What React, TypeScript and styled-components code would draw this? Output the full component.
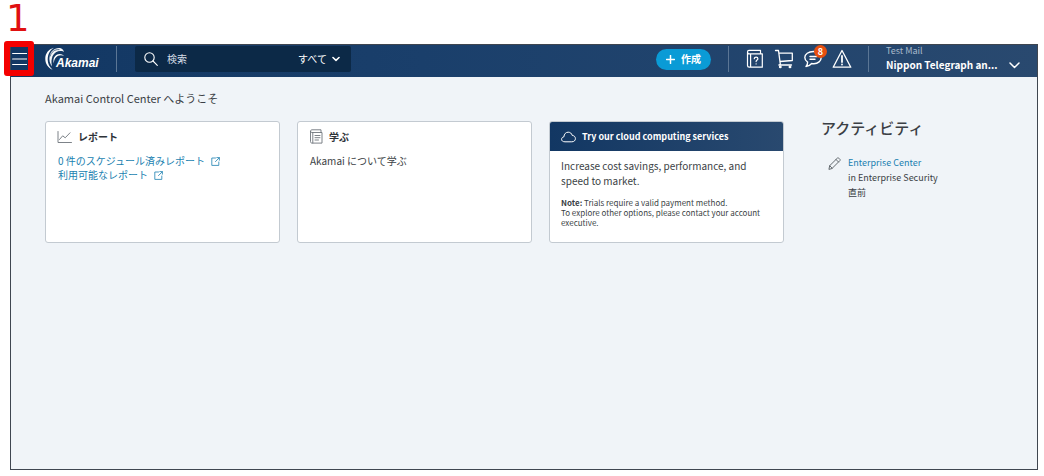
import React from "react";
import styled, { createGlobalStyle } from "styled-components";

const GlobalStyle = createGlobalStyle`
  * { box-sizing: border-box; }
  body {
    margin: 0;
    background: #fff;
    color: #3b3f45;
    font-family: "Noto Sans CJK JP", "Noto Sans", sans-serif;
    font-size: 10px;
    line-height: 14px;
  }
  h1, h2, p { margin: 0; font-weight: 400; }
  button, input, select { font: inherit; color: inherit; }
  svg { display: block; flex: none; }
`;

const Page = styled.div`
  display: flex;
  flex-direction: column;
  min-height: 100vh;
  padding: 0 6px 6px 10px;
`;

const StepNumber = styled.div`
  height: 44px;
  margin-left: -4px;
  color: #e01010;
  font-family: "DejaVu Sans", sans-serif;
  font-size: 37px;
  line-height: 38px;
`;

const Frame = styled.div`
  position: relative;
  display: flex;
  flex: 1;
  flex-direction: column;
  border: 1px solid #3f4650;
  background: #f0f4f8;
`;

const StepMarker = styled.div`
  position: absolute;
  top: -4px;
  left: -7px;
  width: 30px;
  height: 35px;
  border: 6px solid #f40000;
  border-radius: 3px;
  pointer-events: none;
`;

const Header = styled.header`
  display: flex;
  align-items: center;
  height: 32px;
  padding-bottom: 4px;
  color: #fff;
  background: linear-gradient(90deg, #123763 0%, #1a3f6b 40%, #29496f 100%);
`;

const IconButton = styled.button`
  position: relative;
  display: flex;
  align-items: center;
  justify-content: center;
  width: 20px;
  height: 20px;
  padding: 0;
  border: 0;
  background: none;
`;

const MenuButton = styled(IconButton)`
  width: 16px;
`;

const Divider = styled.span<{ $left: number; $right: number }>`
  width: 1px;
  height: 26px;
  margin: 0 ${(p) => p.$right}px 0 ${(p) => p.$left}px;
  background: #5b7695;
`;

const LogoLink = styled.a`
  display: block;
  margin-left: 18px;
`;

const Search = styled.form`
  display: flex;
  align-items: center;
  width: 216px;
  height: 26px;
  padding: 0 11px 0 9px;
  border-radius: 2px;
  background: #0c2947;
`;

const SearchInput = styled.input`
  flex: 1;
  min-width: 0;
  margin-left: 9px;
  padding: 0;
  border: 0;
  outline: 0;
  background: none;
  &::placeholder { color: #d5dde6; opacity: 1; }
`;

const ScopeSelect = styled.select`
  width: 34px;
  padding: 0;
  border: 0;
  outline: 0;
  appearance: none;
  background: none;
`;

const CreateButton = styled.button`
  display: flex;
  align-items: center;
  justify-content: center;
  gap: 6px;
  width: 55px;
  height: 21px;
  margin-left: auto;
  padding: 0;
  border: 0;
  border-radius: 11px;
  background: #0a9bd6;
  font-weight: 700;
`;

const Tools = styled.nav`
  display: flex;
  gap: 9px;
`;

const Badge = styled.span`
  position: absolute;
  top: -4px;
  right: -4px;
  width: 13px;
  height: 13px;
  border-radius: 50%;
  background: #e8500f;
  font-size: 9px;
  font-weight: 700;
  line-height: 13px;
  text-align: center;
`;

const Account = styled.button`
  display: flex;
  align-items: flex-end;
  gap: 11px;
  width: 151px;
  padding: 0 0 4px;
  border: 0;
  background: none;
  text-align: left;
  svg { margin-bottom: 3px; }
`;

const AccountText = styled.span`
  display: flex;
  flex-direction: column;
  strong { line-height: 14px; }
  span { color: #a9bacb; font-size: 9px; line-height: 15px; }
`;

const Content = styled.div`
  display: flex;
  gap: 37px;
  padding: 14px 0 20px 34px;
`;

const Main = styled.main`
  flex: 1;
`;

const Welcome = styled.h1`
  font-size: 11px;
  line-height: 14px;
`;

const Cards = styled.div`
  display: grid;
  grid-template-columns: repeat(3, 1fr);
  gap: 17px;
  margin-top: 16px;
`;

const Card = styled.section`
  min-height: 122px;
  border: 1px solid #c3cad1;
  border-radius: 3px;
  background: #fff;
  overflow: hidden;
`;

const CardTitle = styled.h2<{ $dark?: boolean }>`
  display: flex;
  align-items: center;
  gap: 6px;
  height: 29px;
  padding: 0 11px;
  font-size: ${(p) => (p.$dark ? 9 : 10)}px;
  font-weight: 700;
  color: ${(p) => (p.$dark ? "#fff" : "#2e3338")};
  background: ${(p) => (p.$dark ? "linear-gradient(90deg, #123763, #29496f)" : "none")};
`;

const CardBody = styled.div`
  padding: 3px 12px;
`;

const PromoBody = styled.div`
  padding: 7px 11px;
`;

const Lead = styled.p`
  line-height: 15px;
`;

const Note = styled.p`
  margin-top: 10px;
  font-size: 8px;
  line-height: 10px;
`;

const Link = styled.a`
  color: #1a7fb0;
  text-decoration: none;
`;

const ExternalLink = styled(Link)`
  display: flex;
  align-items: center;
  gap: 6px;
`;

const Activity = styled.aside`
  width: 216px;
  padding-top: 27px;
`;

const ActivityTitle = styled.h2`
  font-size: 15px;
  font-weight: 500;
  line-height: 20px;
`;

const ActivityItem = styled.div`
  display: flex;
  gap: 7px;
  margin-top: 17px;
  padding-left: 7px;
  svg { margin-top: 2px; }
`;

const ActivityText = styled.div`
  display: flex;
  flex-direction: column;
  font-size: 9px;
  line-height: 15px;
`;

const line = { fill: "none", stroke: "currentColor", strokeWidth: 1.2, strokeLinecap: "round", strokeLinejoin: "round" } as const;

const External = () => (
  <svg width="9" height="9" viewBox="0 0 9 9" {...line} strokeWidth="0.8">
    <path d="M4.500 1H.8v7.400h7V5M5.800.6h2.600v2.600M8.200.8 4.500 4.600" />
  </svg>
);

const Logo = () => (
  <svg width="56" height="24" viewBox="0 0 56 24">
    <g fill="#fff">
      <path d="M9 .8C3.500 2.200.2 6.600.3 12c0 5 2.900 8.900 7.300 10.700C4.400 20 2.700 16.700 2.700 12.700 2.700 7.200 5.100 3 9 .8z" />
      <path d="M15 1.100C9.500.5 5.500 4.400 4.600 9.200c-.7 3.900.2 7.500 2.500 10.200C6 15.800 6.300 12 8 8.600c1.600-3.100 4.500-5 8.500-4.600 1 .1 1.700.4 2.500.9C18.200 2.700 17 1.500 15 1.100z" opacity=".95" />
      <path d="M10 9.300c2.400-3 6.500-3.200 9.300-.2-3.400-1.500-6.300-.8-8.400 1.500-1.500 1.700-2 3.600-2 6-.9-2.900-.6-5.300 1.100-7.300z" />
    </g>
    <path d="M5 9.500C6.200 5 9.500 2.300 14.500 2.600M7.800 9.600c1.700-3.600 5.500-5.200 9.500-4" fill="none" stroke="#173c68" strokeWidth=".7" />
    <text x="11" y="20" fill="#fff" fontFamily="Liberation Sans, sans-serif" fontSize="12" fontStyle="italic" fontWeight="700">Akamai</text>
  </svg>
);

export default function App() {
  return (
    <>
      <GlobalStyle />
      <Page>
        <StepNumber>1</StepNumber>
        <Frame>
          <Header>
            <MenuButton aria-label="Menu">
              <svg width="15" height="14" viewBox="0 0 15 14" {...line} strokeWidth="1.100">
                <path d="M.6 1.500h14M.6 7h14M.6 12.500h14" />
              </svg>
            </MenuButton>
            <LogoLink href="#" aria-label="Akamai"><Logo /></LogoLink>
            <Divider $left={15} $right={18} />
            <Search>
              <svg width="14" height="14" viewBox="0 0 14 14" {...line} strokeWidth="1.100">
                <circle cx="5.500" cy="5.500" r="4.700" />
                <path d="m9 9 4.300 4.300" />
              </svg>
              <SearchInput aria-label="検索" placeholder="検索" />
              <ScopeSelect aria-label="範囲"><option>すべて</option></ScopeSelect>
              <svg width="8" height="6" viewBox="0 0 8 6" {...line} strokeWidth="1.600"><path d="m1 1.500 3 2.800 3-2.800" /></svg>
            </Search>
            <CreateButton>
              <svg width="9" height="9" viewBox="0 0 9 9" {...line} strokeWidth="1.500"><path d="M4.500.5v8M.5 4.500h8" /></svg>
              作成
            </CreateButton>
            <Divider $left={17} $right={16} />
            <Tools>
              <IconButton aria-label="Help">
                <svg width="18" height="20" viewBox="0 0 18 20" {...line}>
                  <path d="M1.500 3.500v13c0 1 .6 1.700 1.600 1.700h13.200V4.800H3c-2 0-2-3.500 0-3.500h11.500v3.200M4.600 5v13" />
                  <path d="M8.300 9.700c0-2.200 3.600-2.200 3.600 0 0 1.400-1.800 1.300-1.800 2.900M10.100 14.800v.2" />
                </svg>
              </IconButton>
              <IconButton aria-label="Cart">
                <svg width="20" height="20" viewBox="0 0 20 20" {...line} strokeWidth="1.300">
                  <path d="M1.500 1.500h3l1.800 13.700M4.800 4.200h13.500v7.300L6 12.500M6.300 15.200 4.800 16h12.700" />
                  <circle cx="6.300" cy="17.900" r=".8" /><circle cx="16" cy="17.900" r=".8" />
                </svg>
              </IconButton>
              <IconButton aria-label="Messages">
                <svg width="20" height="20" viewBox="0 0 20 20" {...line} strokeWidth="1.400">
                  <path d="M10.500 2.500c4.600 0 7.700 2.600 7.700 6s-3.200 6.200-7.300 6.200c-.8 0-1.500 0-2.200-.2-1.500 1.700-3.200 3-5.700 3 1.200-1.300 1.700-2.800 1.600-4.400C2.900 12 1.800 10.300 1.800 8.500c0-3.400 3.600-6 8.700-6zM7 7.500h7M7 10.300h5" />
                </svg>
                <Badge>8</Badge>
              </IconButton>
              <IconButton aria-label="Alerts">
                <svg width="20" height="20" viewBox="0 0 20 20" {...line} strokeWidth="1.300">
                  <path d="M10 1.500 18.800 18.200H1.200z" /><path d="M10 7v6M10 15.300v.2" strokeWidth="1.800" />
                </svg>
              </IconButton>
            </Tools>
            <Divider $left={16} $right={17} />
            <Account>
              <AccountText>
                <span>Test Mail</span>
                <strong>Nippon Telegraph an...</strong>
              </AccountText>
              <svg width="11" height="7" viewBox="0 0 11 7" {...line} strokeWidth="1.500"><path d="m1 1 4.500 4.500L10 1" /></svg>
            </Account>
          </Header>
          <Content>
            <Main>
              <Welcome>Akamai Control Center へようこそ</Welcome>
              <Cards>
                <Card>
                  <CardTitle>
                    <svg width="15" height="12" viewBox="0 0 15 12" {...line} stroke="#6e757c" strokeWidth="0.900">
                      <path d="M1 .5v11h13.500M2.500 8.500l3.200-3.700 2.500 2 4.800-5" />
                    </svg>
                    レポート
                  </CardTitle>
                  <CardBody>
                    <ExternalLink href="#">0 件のスケジュール済みレポート<External /></ExternalLink>
                    <ExternalLink href="#">利用可能なレポート<External /></ExternalLink>
                  </CardBody>
                </Card>
                <Card>
                  <CardTitle>
                    <svg width="14" height="15" viewBox="0 0 14 15" {...line} stroke="#6e757c" strokeWidth="0.900">
                      <path d="M1.500 2.500v10c0 1 .5 1.600 1.500 1.600h10V3.500H2.800c-1.700 0-1.700-2.700 0-2.700H12v2.500M3.800 3.800V14M6 6.500h5M6 8.700h5M6 11h3.500" />
                    </svg>
                    学ぶ
                  </CardTitle>
                  <CardBody>Akamai について学ぶ</CardBody>
                </Card>
                <Card>
                  <CardTitle $dark>
                    <svg width="15" height="12" viewBox="0 0 15 12" {...line} strokeWidth="1">
                      <path d="M3.600 10.800C1.800 10.800.6 9.800.6 8.300c0-1.300.9-2.300 2.300-2.500C3.100 3 4.800 1.200 7.200 1.200c2 0 3.500 1.200 4 3.200 1.900.1 3.200 1.400 3.200 3.200s-1.300 3.200-3.200 3.200z" />
                    </svg>
                    Try our cloud computing services
                  </CardTitle>
                  <PromoBody>
                    <Lead>Increase cost savings, performance, and<br />speed to market.</Lead>
                    <Note>
                      <strong>Note:</strong> Trials require a valid payment method.<br />
                      To explore other options, please contact your account executive.
                    </Note>
                  </PromoBody>
                </Card>
              </Cards>
            </Main>
            <Activity>
              <ActivityTitle>アクティビティ</ActivityTitle>
              <ActivityItem>
                <svg width="13" height="13" viewBox="0 0 13 13" {...line} stroke="#555b61" strokeWidth="0.900">
                  <path d="M1 12l.7-3.300L9.300 1.200c.5-.5 1-.5 1.500 0l1 1c.5.500.5 1 0 1.500L4.200 11.300zM8 2.500 10.500 5M1.700 8.700l2.500 2.600" />
                </svg>
                <ActivityText>
                  <Link href="#">Enterprise Center</Link>
                  <span>in Enterprise Security</span>
                  <span>直前</span>
                </ActivityText>
              </ActivityItem>
            </Activity>
          </Content>
          <StepMarker />
        </Frame>
      </Page>
    </>
  );
}
